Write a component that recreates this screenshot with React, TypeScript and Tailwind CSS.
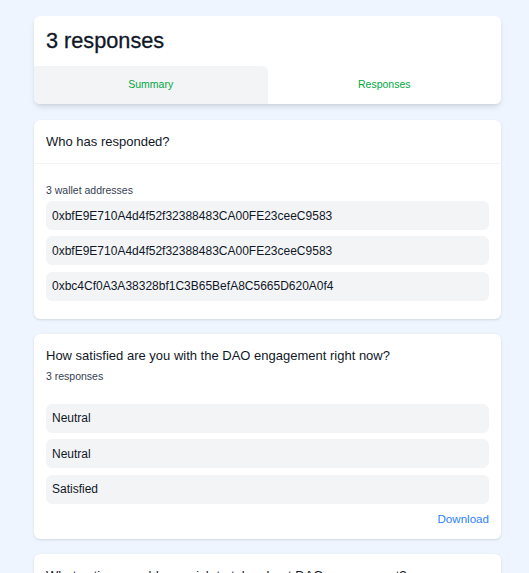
const addresses = [
  '0xbfE9E710A4d4f52f32388483CA00FE23ceeC9583',
  '0xbfE9E710A4d4f52f32388483CA00FE23ceeC9583',
  '0xbc4Cf0A3A38328bf1C3B65BefA8C5665D620A0f4',
];

const answers = ['Neutral', 'Neutral', 'Satisfied'];

function AnswerBox({ children }: { children: React.ReactNode }) {
  return (
    <div className="flex h-[29px] items-center rounded-md bg-gray-100 px-1.5 text-[12px] text-gray-900">
      {children}
    </div>
  );
}

export default function App() {
  return (
    <div
      className="min-h-screen bg-[#eef5fe] pt-4 pr-[28px] pl-[34px] pb-10"
      style={{ fontFamily: '"Liberation Sans", Arial, sans-serif' }}
    >
      {/* header card with tabs */}
      <div className="overflow-hidden rounded-md bg-white shadow-md">
        <div className="flex h-[50px] items-center px-3">
          <h1 className="text-[21.7px] font-medium text-gray-900 [-webkit-text-stroke:0.3px]">
            3 responses
          </h1>
        </div>
        <div className="grid h-[38px] grid-cols-2">
          <button className="rounded-tr-md bg-gray-100 text-[10.5px] font-medium text-green-600">
            Summary
          </button>
          <button className="bg-white text-[10.5px] font-medium text-green-600">Responses</button>
        </div>
      </div>

      {/* who has responded */}
      <div className="mt-4 rounded-md bg-white shadow-sm">
        <div className="flex h-[44px] items-center border-b border-gray-100 px-3 text-[13px] text-gray-900">
          Who has responded?
        </div>
        <div className="px-3 pt-[18px] pb-[18px]">
          <p className="text-[10.5px] leading-4 text-gray-700">3 wallet addresses</p>
          <div className="mt-[3px] flex flex-col gap-[6.3px]">
            {addresses.map((a, i) => (
              <AnswerBox key={i}>{a}</AnswerBox>
            ))}
          </div>
        </div>
      </div>

      {/* question */}
      <div className="mt-[15px] rounded-md bg-white px-3 pt-3 pb-[10.5px] shadow-sm">
        <p className="text-[13px] leading-5 text-gray-900">
          How satisfied are you with the DAO engagement right now?
        </p>
        <p className="mt-[2px] text-[10.5px] leading-4 text-gray-700">3 responses</p>
        <div className="mt-5 flex flex-col gap-[6.5px]">
          {answers.map((a, i) => (
            <AnswerBox key={i}>{a}</AnswerBox>
          ))}
        </div>
        <div className="mt-[5px] flex justify-end">
          <button className="text-[11.6px] leading-5 text-blue-500">Download</button>
        </div>
      </div>

      <div className="mt-[14.5px] rounded-md bg-white px-3 pt-3 pb-4 shadow-sm">
        <p className="text-[13px] leading-5 text-gray-900">
          What actions would you wish to take about DAO engagement?
        </p>
        <p className="mt-[2px] text-[10.5px] leading-4 text-gray-700">3 responses</p>
      </div>
    </div>
  );
}
